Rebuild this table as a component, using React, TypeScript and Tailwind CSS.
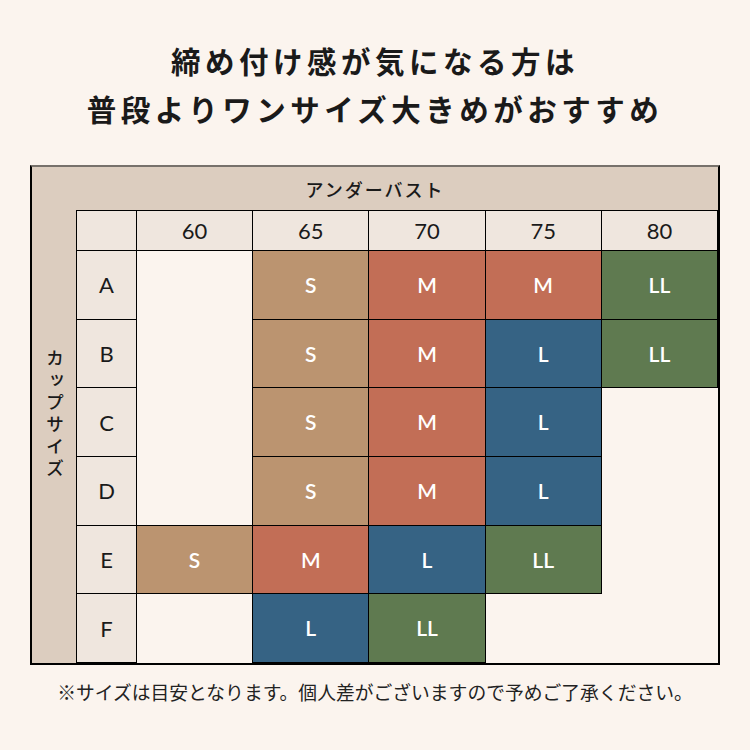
const colors: Record<string, string> = {
  S: "bg-[#bb9470]",
  M: "bg-[#c26e56]",
  L: "bg-[#366384]",
  LL: "bg-[#5f7a50]",
};

const sizes = ["60", "65", "70", "75", "80"];

const rows: { cup: string; cells: (string | null)[] }[] = [
  { cup: "A", cells: [null, "S", "M", "M", "LL"] },
  { cup: "B", cells: [null, "S", "M", "L", "LL"] },
  { cup: "C", cells: [null, "S", "M", "L", null] },
  { cup: "D", cells: [null, "S", "M", "L", null] },
  { cup: "E", cells: ["S", "M", "L", "LL", null] },
  { cup: "F", cells: [null, "L", "LL", null, null] },
];

const jp = "font-['Noto_Sans_CJK_JP',sans-serif]";
const latin = "font-['Lato','Noto_Sans',sans-serif]";

export default function App() {
  return (
    <div className={`w-[750px] h-[750px] bg-[#fbf4ee] flex flex-col items-center pt-[36px] text-[#1a1a1a] ${jp}`}>
      <h1 className="text-[29.5px] font-bold leading-[48px] tracking-[4.5px] text-center">
        締め付け感が気になる方は
        <br />
        普段よりワンサイズ大きめがおすすめ
      </h1>

      <div className="mt-[33px] w-[690px] border-2 border-black border-t-[#77716b]">
        {/* under bust */}
        <div className="h-[44px] bg-[#dccdbf] flex items-center justify-center text-[18px] font-medium tracking-[2px]">
          アンダーバスト
        </div>
        <div className="flex">
          {/* cup size */}
          <div className="w-[45px] bg-[#dccdbf] flex items-center justify-center">
            <span className="[writing-mode:vertical-rl] text-[18px] font-medium tracking-[4px] -mt-[44px]">カップサイズ</span>
          </div>
          <div className={`grid flex-1 h-[452px] grid-cols-[60px_repeat(5,1fr)] grid-rows-[40px_repeat(6,1fr)] text-[22px] ${latin}`}>
            <div className="-mt-px -ml-px border border-black bg-[#efe6de]" />
            {sizes.map((s) => (
              <div key={s} className="-mt-px -ml-px border border-black bg-[#efe6de] flex items-center justify-center">
                {s}
              </div>
            ))}
            {rows.map((r) => (
              <>
                <div key={r.cup} className="-mt-px -ml-px border border-black bg-[#efe6de] flex items-center justify-center">
                  {r.cup}
                </div>
                {r.cells.map((c, i) =>
                  c ? (
                    <div
                      key={r.cup + i}
                      className={`-mt-px -ml-px border border-black ${colors[c]} flex items-center justify-center text-white font-semibold text-[21px]`}
                    >
                      {c}
                    </div>
                  ) : (
                    <div key={r.cup + i} />
                  )
                )}
              </>
            ))}
          </div>
        </div>
      </div>

      <p className="mt-[13px] text-[18.8px] text-[#222]">
        ※サイズは目安となります。個人差がございますので予めご了承ください。
      </p>
    </div>
  );
}
